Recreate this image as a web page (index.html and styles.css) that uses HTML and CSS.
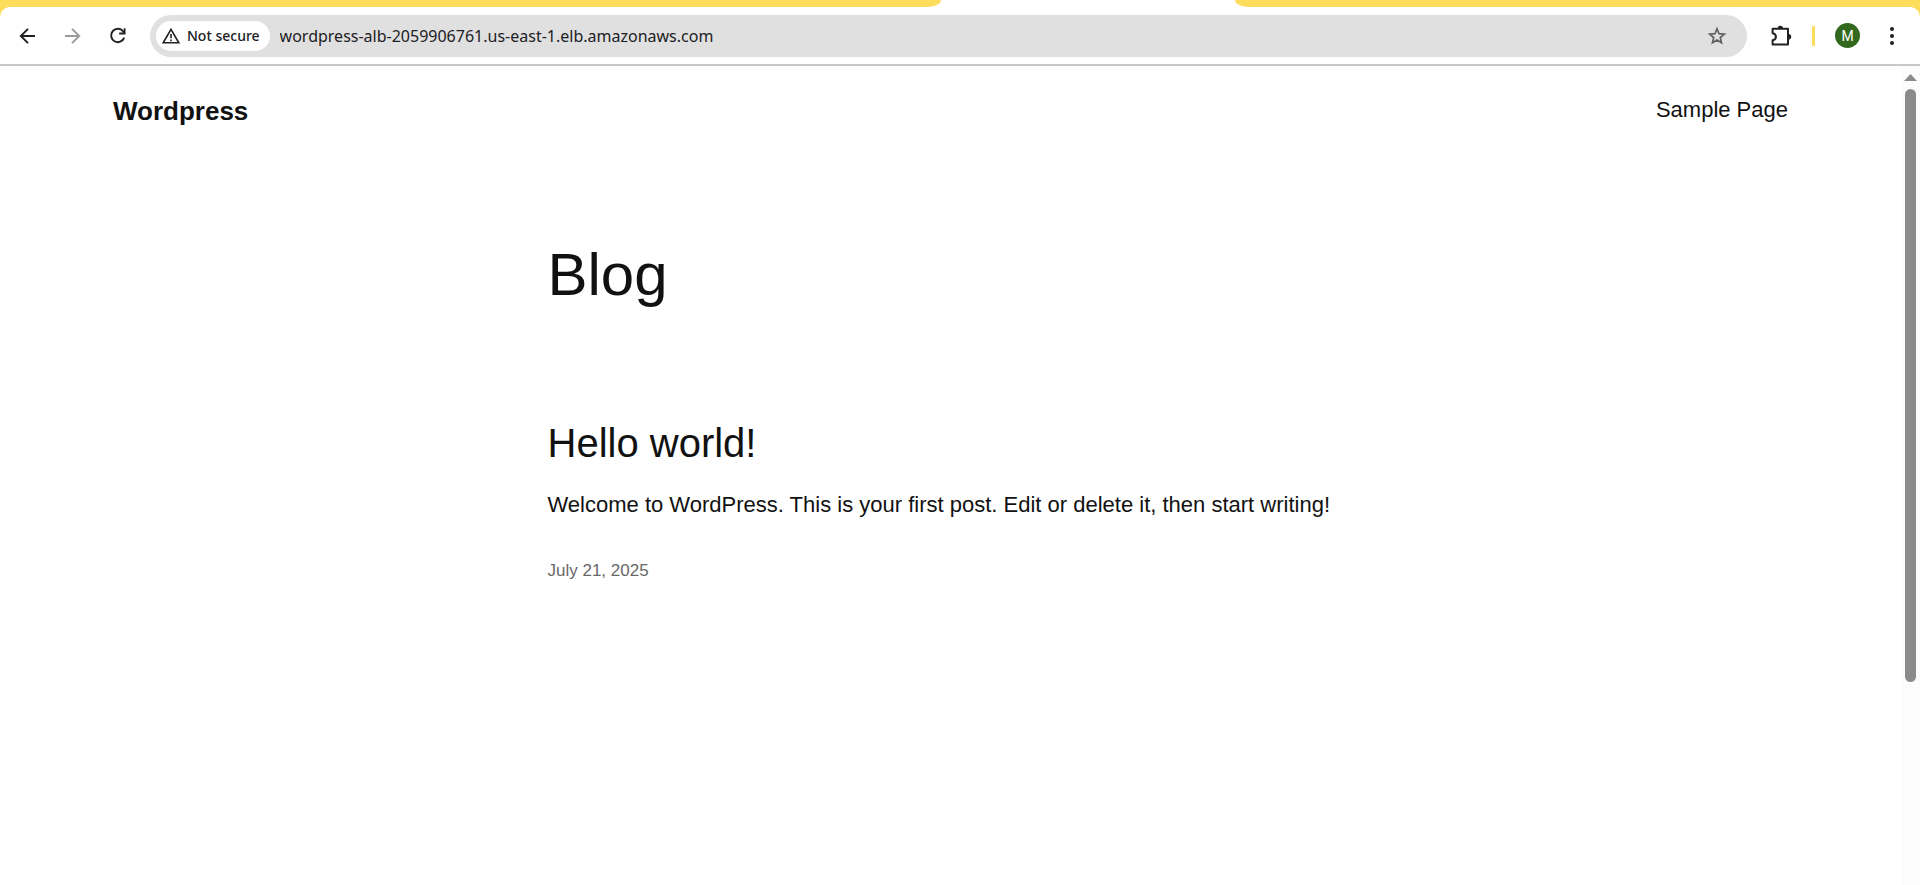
FILE: index.html
```html
<!DOCTYPE html>
<html lang="en">
<head>
<meta charset="utf-8">
<title>Wordpress</title>
<link rel="stylesheet" href="styles.css">
</head>
<body>
<div class="browser">
  <div class="tab-strip">
    <div class="strip-left"></div>
    <div class="strip-right"></div>
  </div>
  <div class="toolbar-frame">
    <div class="toolbar">
      <nav class="nav-buttons" aria-label="Browser navigation">
        <button class="icon-button" type="button" aria-label="Back">
          <svg width="18" height="18" viewBox="0 0 18 18"><path d="M16 9H2.5M9 1.8L1.8 9L9 16.2" fill="none" stroke="#202124" stroke-width="1.9"/></svg>
        </button>
        <button class="icon-button" type="button" aria-label="Forward" disabled>
          <svg width="18" height="18" viewBox="0 0 18 18"><path d="M1 9H15.5M8 1.8L15.2 9L8 16.2" fill="none" stroke="#9b9b9b" stroke-width="1.9"/></svg>
        </button>
        <button class="icon-button" type="button" aria-label="Reload">
          <svg width="18" height="18" viewBox="0 0 18 18"><path d="M15.2 10.6A6.7 6.7 0 1 1 14.2 4.4L15.5 6" fill="none" stroke="#202124" stroke-width="1.9"/><path d="M16.5 1.2V7.4H10.2V5.6H14.7V1.2Z" fill="#202124"/></svg>
        </button>
      </nav>
      <div class="omnibox">
        <button class="security-chip" type="button">
          <svg width="20" height="18" viewBox="0 0 20 18"><path d="M10 2.4L17.8 15.8H2.2Z" fill="none" stroke="#202124" stroke-width="1.6"/><path d="M10 7V11.2M10 12.4V14.2" stroke="#202124" stroke-width="1.6"/></svg>
          Not secure
        </button>
        <input class="url" type="text" aria-label="Address" value="wordpress-alb-2059906761.us-east-1.elb.amazonaws.com">
        <button class="icon-button" type="button" aria-label="Bookmark this page">
          <svg width="20" height="20" viewBox="0 0 20 20"><path d="M10 2.8L12 7.7L17.3 8.1L13.3 11.6L14.5 16.8L10 14L5.5 16.8L6.7 11.6L2.7 8.1L8 7.7Z" fill="none" stroke="#5f6063" stroke-width="1.7"/></svg>
        </button>
      </div>
      <div class="actions">
        <button class="icon-button" type="button" aria-label="Extensions">
          <svg width="22" height="22" viewBox="0 0 22 22"><path d="M2.6 3.8H18V19.6H2.6V15.2C7 14.6 7 8.8 2.6 8.2Z" fill="none" stroke="#202124" stroke-width="2" stroke-linejoin="round"/><path d="M7.6 3.4a2.7 2.7 0 0 1 5.4 0ZM18.4 8.9a2.8 2.8 0 0 1 0 5.6Z" fill="#202124"/></svg>
        </button>
        <span class="divider"></span>
        <button class="avatar" type="button" aria-label="Profile M">M</button>
        <button class="icon-button" type="button" aria-label="Menu">
          <svg width="6" height="20" viewBox="0 0 6 20"><g fill="#202124"><circle cx="3" cy="3" r="2"/><circle cx="3" cy="10" r="2"/><circle cx="3" cy="17" r="2"/></g></svg>
        </button>
      </div>
    </div>
  </div>
  <div class="viewport">
    <div class="page">
      <header class="site-header">
        <a class="site-title" href="#">Wordpress</a>
        <nav aria-label="Pages"><a class="page-link" href="#">Sample Page</a></nav>
      </header>
      <main class="content">
        <h1 class="heading">Blog</h1>
        <article>
          <h2 class="post-title"><a href="#">Hello world!</a></h2>
          <p class="post-text">Welcome to WordPress. This is your first post. Edit or delete it, then start writing!</p>
          <a class="post-date" href="#"><time datetime="2025-07-21">July 21, 2025</time></a>
        </article>
      </main>
    </div>
    <div class="scrollbar" aria-hidden="true">
      <svg width="13" height="7" viewBox="0 0 13 7"><path d="M6.5 0L13 7H0Z" fill="#8b8b8b"/></svg>
      <div class="track"><div class="thumb"></div></div>
    </div>
  </div>
</div>
</body>
</html>
```
FILE: styles.css
```css
* { box-sizing: border-box; }
body { margin: 0; background: #fff; color: #111; font-family: "Liberation Sans", Arial, sans-serif; }
a { color: inherit; text-decoration: none; }
button { border: 0; padding: 0; background: none; font: inherit; color: inherit; }
svg { display: block; }

.browser { display: flex; flex-direction: column; min-height: 100vh; }
.tab-strip { display: flex; justify-content: space-between; height: 7px; background: #fff; }
.strip-left, .strip-right { background: #ffdd5c; }
.strip-left { width: 49%; border-bottom-right-radius: 14px 7px; }
.strip-right { width: 35.7%; border-bottom-left-radius: 14px 7px; }

.toolbar-frame { background: #ffdd5c; }
.toolbar {
  display: flex; align-items: center; height: 59px; padding: 0 25px 0 19px;
  background: #fff; border-bottom: 2px solid #c8c8c8; border-radius: 10px 10px 0 0;
}
.nav-buttons { display: flex; gap: 27px; margin-right: 23px; }
.omnibox {
  display: flex; flex: 1; align-items: center; height: 42px; padding: 0 20px 0 6px;
  background: #e0e0e0; border-radius: 21px;
}
.security-chip {
  display: flex; align-items: center; gap: 6px; height: 30px; padding: 0 10px 0 5px;
  background: #fff; border-radius: 15px; color: #202124;
  font: 500 14px "Noto Sans", "Open Sans", sans-serif;
}
.url {
  flex: 1; min-width: 0; margin-left: 10px; padding: 0; border: 0; background: none;
  color: #202124; font: 16px "Noto Sans", "Open Sans", sans-serif;
}
.actions { display: flex; align-items: center; margin-left: 23px; }
.divider { width: 3px; height: 20px; margin: 0 20px 0 20px; background: #ffdd5c; border-radius: 1px; }
.avatar {
  width: 25px; height: 25px; margin-right: 29px; border-radius: 50%;
  background: #33691e; color: #fff; font: 14px Roboto, sans-serif;
}

.viewport { display: flex; flex: 1; }
.page { flex: 1; }
.site-header {
  display: flex; align-items: center; justify-content: space-between;
  max-width: 1675px; margin: 0 auto; padding-top: 24px; line-height: 40px;
}
.site-title { font-size: 26px; font-weight: 700; }
.page-link { font-size: 22px; }
.content { max-width: 806px; margin: 0 auto; }
.heading { margin: 108px 0 0; font-size: 60px; font-weight: 400; line-height: 70px; }
.post-title { margin: 110px 0 0; font-size: 40px; font-weight: 400; line-height: 46px; }
.post-text { margin: 22px 0 0; font-size: 22px; line-height: 34px; }
.post-date { display: block; margin-top: 36px; color: #686868; font-size: 17px; line-height: 26px; }

.scrollbar {
  display: flex; flex-direction: column; align-items: center; gap: 8px;
  width: 19px; padding: 8px 0 26px; background: #fcfcfc;
}
.track { flex: 1; width: 11px; }
.thumb { width: 11px; height: 77%; background: #8b8b8b; border-radius: 6px; }
```
